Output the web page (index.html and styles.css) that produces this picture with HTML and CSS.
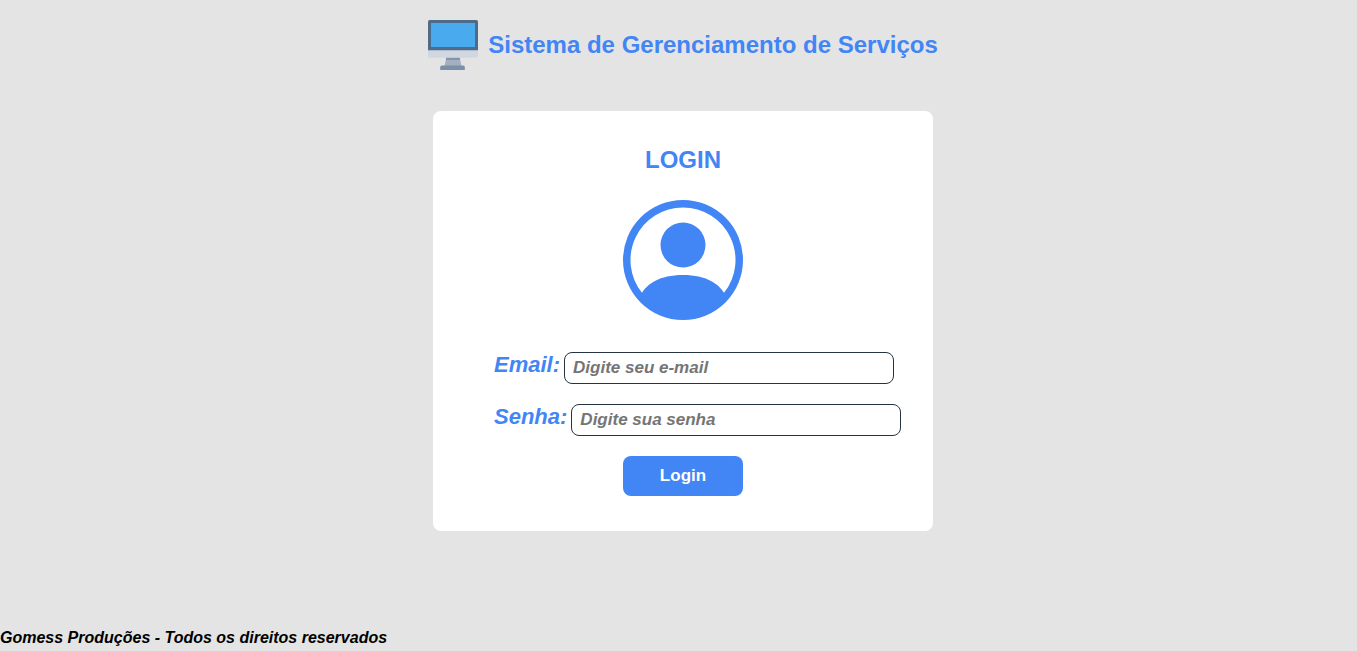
FILE: index.html
```html
<!DOCTYPE html>
<html lang="pt-BR">
<head>
  <meta charset="UTF-8">
  <meta name="viewport" content="width=device-width, initial-scale=1">
  <title>Sistema de Gerenciamento de Serviços</title>
  <link rel="stylesheet" href="styles.css">
</head>
<body>
  <header class="header">
    <svg class="header-icon" viewBox="0 0 50 50" aria-hidden="true">
      <path fill="#a4afc1" d="M18.500 37h13l2 9h-17z"/>
      <path fill="#8394ab" d="M18.500 37h13l.7 3H17.800z"/>
      <path fill="#7b8fa6" d="M14 45.500h21a1.800 1.800 0 0 1 1.800 1.800V50H12.200v-2.700a1.800 1.800 0 0 1 1.800-1.800z"/>
      <path fill="#d0d7e1" d="M0 30h50v6a1.700 1.700 0 0 1-1.700 1.700H1.700A1.700 1.700 0 0 1 0 36z"/>
      <path fill="#4e6b8a" d="M1.700 0h46.600A1.700 1.700 0 0 1 50 1.700v28.500H0V1.700A1.700 1.700 0 0 1 1.700 0z"/>
      <path fill="#4aaaee" d="M3 3h44v24H3z"/>
    </svg>
    <h1 class="header-title">Sistema de Gerenciamento de Serviços</h1>
  </header>
  <main class="main">
    <form class="card">
      <h2 class="card-title">LOGIN</h2>
      <svg class="avatar" viewBox="0 0 16 16" fill="currentColor" aria-hidden="true">
        <path d="M11 6a3 3 0 1 1-6 0 3 3 0 0 1 6 0"/>
        <path fill-rule="evenodd" d="M0 8a8 8 0 1 1 16 0A8 8 0 0 1 0 8m8-7a7 7 0 0 0-5.468 11.370C3.242 11.226 4.805 10 8 10s4.757 1.225 5.468 2.370A7 7 0 0 0 8 1"/>
      </svg>
      <div class="fields">
        <div class="field">
          <label class="label" for="email">Email:</label>
          <input class="input" id="email" type="email" placeholder="Digite seu e-mail">
        </div>
        <div class="field">
          <label class="label" for="senha">Senha:</label>
          <input class="input" id="senha" type="password" placeholder="Digite sua senha">
        </div>
      </div>
      <button class="button" type="submit">Login</button>
    </form>
  </main>
  <footer class="footer">Gomess Produções - Todos os direitos reservados</footer>
</body>
</html>
```
FILE: styles.css
```css
* {
  box-sizing: border-box;
}

body {
  display: flex;
  flex-direction: column;
  min-height: 100vh;
  margin: 0;
  background: #e4e4e4;
  font-family: "Liberation Sans", Arial, sans-serif;
}

.header {
  display: flex;
  align-items: center;
  justify-content: center;
  gap: 10px;
  padding: 20px 0 20px 9px;
}

.header-icon {
  width: 50px;
  height: 50px;
}

.header-title,
.card-title {
  margin: 0;
  color: #4285f4;
  font-size: 24px;
  line-height: 28px;
}

.main {
  display: flex;
  flex: 1;
  align-items: flex-start;
  justify-content: center;
  padding: 21px 0 20px 9px;
}

.card {
  display: flex;
  flex-direction: column;
  align-items: center;
  width: 100%;
  max-width: 500px;
  padding: 35px 32px;
  border-radius: 8px;
  background: #fff;
}

.avatar {
  width: 120px;
  height: 120px;
  margin: 26px 0 32px;
  color: #4285f4;
}

.fields {
  display: flex;
  flex-direction: column;
  gap: 20px;
  width: 100%;
  padding-left: 29px;
}

.field {
  display: flex;
  align-items: flex-start;
  gap: 4px;
}

.label {
  color: #4285f4;
  font-size: 22px;
  font-style: italic;
  font-weight: bold;
  line-height: 26px;
}

.input {
  width: 330px;
  min-width: 0;
  height: 32px;
  padding: 0 8px;
  border: 1px solid #263340;
  border-radius: 8px;
  background: #fff;
  font: italic bold 17px "Liberation Sans", Arial, sans-serif;
}

.input::placeholder {
  color: #757575;
}

.button {
  width: 120px;
  height: 40px;
  margin-top: 20px;
  border: 0;
  border-radius: 8px;
  background: #4285f4;
  color: #fff;
  font: bold 17px "Liberation Sans", Arial, sans-serif;
  cursor: pointer;
}

.footer {
  padding-bottom: 3px;
  font-size: 16px;
  font-style: italic;
  font-weight: bold;
  line-height: 20px;
}
```
